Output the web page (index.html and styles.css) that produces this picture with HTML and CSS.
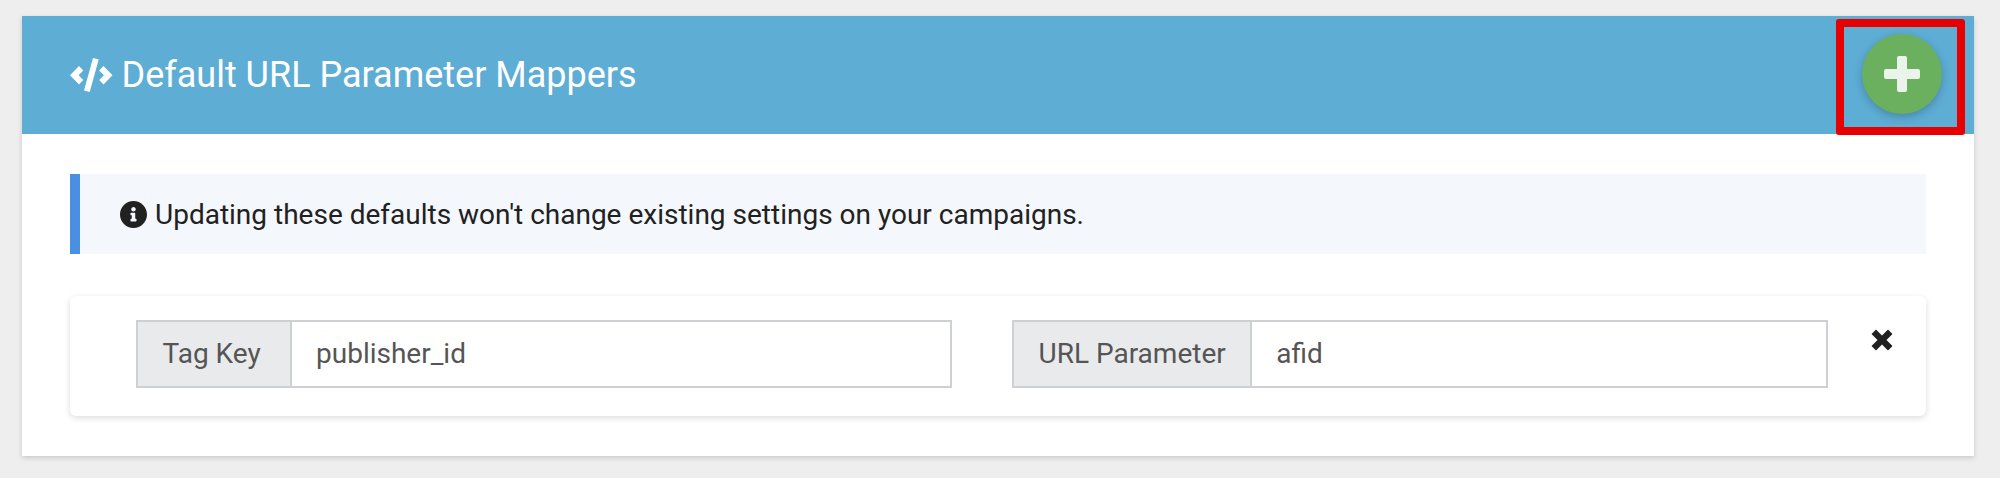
FILE: index.html
```html
<!DOCTYPE html>
<html lang="en">
<head>
<meta charset="utf-8">
<title>Default URL Parameter Mappers</title>
<link rel="stylesheet" href="styles.css">
</head>
<body>
<section class="panel">
  <header class="panel-head">
    <h1 class="panel-title">
      <svg class="icon-code" viewBox="0 0 42.5 34" aria-hidden="true"><path d="M9 8L13.3 12.6 8.6 17.3 13.3 22 9 26.6 0 17.3zM33.5 8L29.2 12.6 33.9 17.3 29.2 22 33.5 26.6 42.5 17.3zM23 0L28.7 1.6 19.7 34 14 32.4z"/></svg>
      <span>Default URL Parameter Mappers</span>
    </h1>
    <button class="fab" type="button" aria-label="Add">
      <svg class="icon-plus" viewBox="0 0 36 36" aria-hidden="true"><path d="M15 0h6a2 2 0 0 1 2 2v11h11a2 2 0 0 1 2 2v6a2 2 0 0 1-2 2H23v11a2 2 0 0 1-2 2h-6a2 2 0 0 1-2-2V23H2a2 2 0 0 1-2-2v-6a2 2 0 0 1 2-2h11V2a2 2 0 0 1 2-2z"/></svg>
    </button>
    <div class="highlight"></div>
  </header>
  <div class="panel-body">
    <div class="notice">
      <svg class="icon-info" viewBox="8 8 496 496" aria-hidden="true"><path d="M256 8C119.043 8 8 119.083 8 256c0 136.997 111.043 248 248 248s248-111.003 248-248C504 119.083 392.957 8 256 8zm0 110c23.196 0 42 18.804 42 42s-18.804 42-42 42-42-18.804-42-42 18.804-42 42-42zm56 254c0 6.627-5.373 12-12 12h-88c-6.627 0-12-5.373-12-12v-24c0-6.627 5.373-12 12-12h12v-64h-12c-6.627 0-12-5.373-12-12v-24c0-6.627 5.373-12 12-12h64c6.627 0 12 5.373 12 12v100h12c6.627 0 12 5.373 12 12v24z"/></svg>
      <span>Updating these defaults won't change existing settings on your campaigns.</span>
    </div>
    <div class="card">
      <div class="field">
        <span class="field-label">Tag Key</span>
        <span class="field-value">publisher_id</span>
      </div>
      <div class="field">
        <span class="field-label">URL Parameter</span>
        <span class="field-value">afid</span>
      </div>
      <svg class="icon-times" viewBox="0 0 22 22" aria-hidden="true"><path d="M5 .5L11 6.5 17 .5 21.5 5 15.5 11 21.5 17 17 21.5 11 15.5 5 21.5 .5 17 6.5 11 .5 5z"/></svg>
    </div>
  </div>
</section>
</body>
</html>
```
FILE: styles.css
```css
* { box-sizing: border-box; }
html, body { height: 100%; }
body {
  margin: 0;
  padding: 16px 26px 0 22px;
  background: #eeeeee;
  font-family: Roboto, "Liberation Sans", sans-serif;
  overflow: hidden;
}
.panel {
  background: #fff;
  height: 440px;
  box-shadow: 0 2px 5px rgba(0, 0, 0, 0.16);
}
.panel-head {
  position: relative;
  display: flex;
  align-items: center;
  justify-content: space-between;
  height: 118px;
  padding: 0 32px 0 48px;
  background: #5dadd5;
}
.panel-title {
  display: flex;
  align-items: center;
  gap: 9px;
  margin: 0;
  font-size: 36px;
  font-weight: 400;
  line-height: 40px;
  color: #fff;
}
.icon-code { width: 42.5px; height: 34px; fill: #fff; }
.fab {
  display: flex;
  align-items: center;
  justify-content: center;
  width: 80px;
  height: 80px;
  padding: 0;
  margin-bottom: 2px;
  border: 0;
  border-radius: 50%;
  background: #6ab05f;
  box-shadow: 0 3px 8px rgba(0, 0, 0, 0.22);
}
.icon-plus { width: 36px; height: 36px; fill: #ebf4ea; }
.highlight {
  position: absolute;
  top: 3px;
  right: 9px;
  width: 129px;
  height: 116px;
  border: 8px solid #e60000;
  border-radius: 3px;
}
.panel-body { padding: 40px 48px 0; }
.notice {
  display: flex;
  align-items: center;
  gap: 8px;
  height: 80px;
  padding-left: 40px;
  border-left: 10px solid #4a90e2;
  background: #f4f7fb;
  font-size: 28px;
  color: #212121;
}
.icon-info { width: 27px; height: 27px; fill: #212121; }
.card {
  display: flex;
  align-items: flex-start;
  margin-top: 42px;
  padding: 24px 0 28px 66px;
  height: 120px;
  border-radius: 6px;
  background: #fff;
  box-shadow: 0 2px 6px rgba(0, 0, 0, 0.14);
}
.field {
  display: flex;
  width: 816px;
  height: 68px;
  border: 2px solid #ced1d4;
  font-size: 28px;
  line-height: 64px;
  color: #555;
}
.field + .field { margin-left: 60px; }
.field-label {
  flex: none;
  min-width: 154px;
  padding: 0 24.5px;
  border-right: 2px solid #ced1d4;
  background: #e9eaec;
}
.field-value { padding: 0 24px; }
.icon-times { width: 22px; height: 22px; margin: 9px 0 0 43px; fill: #212121; }
```
